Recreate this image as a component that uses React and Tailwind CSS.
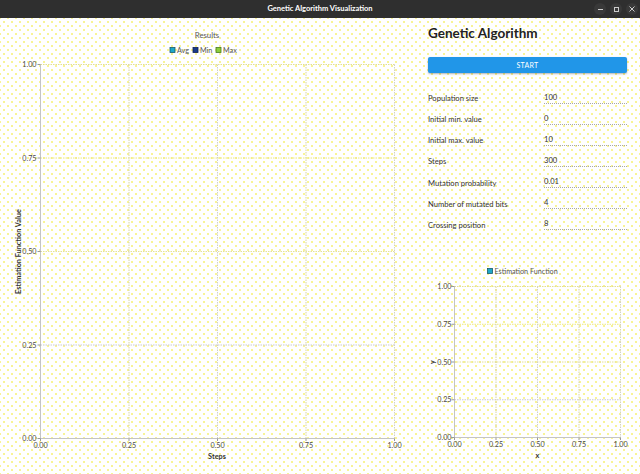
import React from "react";

const FONT = "Lato, 'Noto Sans', sans-serif";

function Legend({ x, y, color, border, label, size = 7.2 }) {
  return (
    <g>
      <rect x={x - 2.5} y={y - 2.5} width={5} height={5} fill={color} stroke={border} strokeWidth={0.8} />
      <text x={x + 4.5} y={y} fontSize={size} fill="#555" dominantBaseline="central" fontFamily={FONT}>
        {label}
      </text>
    </g>
  );
}

function Grid({ xs, ys, yLabelX, xLabelY }) {
  const left = xs[0];
  const right = xs[xs.length - 1];
  const top = ys[0];
  const bottom = ys[ys.length - 1];
  const labels = ["0.00", "0.25", "0.50", "0.75", "1.00"];
  const hColors = ["#e2df92", "#ece87c", "#e4e19a", "#c9c9d0", "#c4c4c4"];
  const vColors = ["#c4c4c4", "#d6d3a4", "#cfcfc8", "#d6d3a4", "#d2d2c0"];
  return (
    <g>
      {ys.map((y, i) => (
        <line
          key={"h" + i}
          x1={left}
          x2={right}
          y1={y}
          y2={y}
          stroke={hColors[i]}
          strokeWidth={1}
          strokeDasharray={i === ys.length - 1 ? "" : "1.5 1"}
        />
      ))}
      {xs.map((x, i) => (
        <line
          key={"v" + i}
          x1={x}
          x2={x}
          y1={top}
          y2={bottom}
          stroke={vColors[i]}
          strokeWidth={1}
          strokeDasharray={i === 0 ? "" : "1.5 1"}
        />
      ))}
      {ys.map((y, i) => (
        <line key={"yt" + i} x1={left - 3} x2={left} y1={y} y2={y} stroke="#999" strokeWidth={1} />
      ))}
      {xs.map((x, i) => (
        <line key={"xt" + i} x1={x} x2={x} y1={bottom} y2={bottom + 2.5} stroke="#999" strokeWidth={1} />
      ))}
      {ys.map((y, i) => (
        <text
          key={"yl" + i}
          x={yLabelX}
          y={y}
          fontSize={7.2}
          fill="#4a4a4a"
          textAnchor="end"
          dominantBaseline="central"
          fontFamily={FONT}
        >
          {labels[labels.length - 1 - i]}
        </text>
      ))}
      {xs.map((x, i) => (
        <text
          key={"xl" + i}
          x={x}
          y={xLabelY}
          fontSize={7.2}
          fill="#4a4a4a"
          textAnchor="middle"
          dominantBaseline="central"
          fontFamily={FONT}
        >
          {labels[i]}
        </text>
      ))}
    </g>
  );
}

function ResultsChart() {
  const xs = [40.5, 129, 217.5, 306, 394.5];
  const ys = [64.5, 158, 251.5, 345, 438.5];
  return (
    <svg width={410} height={456} viewBox="0 18 410 456" className="block">
      <text x={207} y={35} fontSize={7.8} fill="#555" textAnchor="middle" dominantBaseline="central" fontFamily={FONT}>
        Results
      </text>
      <Legend x={172.5} y={50} color="#1fa8c9" border="#1a5a6a" label="Avg" />
      <Legend x={195.5} y={50} color="#1a3c8a" border="#102050" label="Min" />
      <Legend x={218.5} y={50} color="#8ccf3c" border="#4a7a20" label="Max" />
      <Grid xs={xs} ys={ys} yLabelX={36.5} xLabelY={445.5} />
      <text
        x={18}
        y={251.5}
        fontSize={7.3}
        fontWeight="bold"
        fill="#333"
        textAnchor="middle"
        dominantBaseline="central"
        fontFamily={FONT}
        transform="rotate(-90 18 251.5)"
      >
        Estimation Function Value
      </text>
      <text x={217} y={456} fontSize={7.3} fontWeight="bold" fill="#333" textAnchor="middle" dominantBaseline="central" fontFamily={FONT}>
        Steps
      </text>
    </svg>
  );
}

function EstimationChart() {
  const xs = [454.5, 496, 537.5, 579, 620.5];
  const ys = [286.5, 324.25, 362, 399.75, 437.5];
  return (
    <svg width={230} height={238} viewBox="410 236 230 238" className="block">
      <Legend x={490} y={271} color="#1fa8c9" border="#1a5a6a" label="Estimation Function" />
      <Grid xs={xs} ys={ys} yLabelX={451.5} xLabelY={444.5} />
      <text
        x={432.5}
        y={362}
        fontSize={7.3}
        fontWeight="bold"
        fill="#333"
        textAnchor="middle"
        dominantBaseline="central"
        fontFamily={FONT}
        transform="rotate(-90 432.5 362)"
      >
        y
      </text>
      <text x={537.5} y={455.5} fontSize={7.3} fontWeight="bold" fill="#333" textAnchor="middle" dominantBaseline="central" fontFamily={FONT}>
        x
      </text>
    </svg>
  );
}

const rows = [
  ["Population size", "100"],
  ["Initial min. value", "0"],
  ["Initial max. value", "10"],
  ["Steps", "300"],
  ["Mutation probability", "0.01"],
  ["Number of mutated bits", "4"],
  ["Crossing position", "8"],
];

function TitleBar() {
  return (
    <div className="h-[18px] bg-[#2f2f2f] flex items-center relative shrink-0">
      <div className="flex-1 text-center text-white font-bold text-[7.5px] leading-[18px]">
        Genetic Algorithm Visualization
      </div>
      <div className="absolute right-[2px] top-[3px] flex gap-[4px]">
        <div className="w-[12px] h-[12px] rounded-full bg-[#393939] flex items-center justify-center">
          <div className="w-[5px] h-[1px] bg-[#ccc]" />
        </div>
        <div className="w-[12px] h-[12px] rounded-full bg-[#393939] flex items-center justify-center">
          <div className="w-[5px] h-[5px] border border-[#ccc]" />
        </div>
        <div className="w-[12px] h-[12px] rounded-full bg-[#393939] flex items-center justify-center">
          <svg width="6" height="6" viewBox="0 0 6 6">
            <path d="M0.5 0.5 L5.5 5.5 M5.5 0.5 L0.5 5.5" stroke="#ccc" strokeWidth="1" />
          </svg>
        </div>
      </div>
    </div>
  );
}

export default function App() {
  return (
    <div className="w-[640px] h-[474px] flex flex-col overflow-hidden bg-white" style={{ fontFamily: FONT }}>
      <TitleBar />
      <div className="flex-1 flex bg-white bg-[image:radial-gradient(circle,#f6f070_0.6px,transparent_1px),radial-gradient(circle,#f6f070_0.6px,transparent_1px)] bg-[length:8px_8px] bg-[position:0_0,4px_4px]">
        <div className="w-[410px] shrink-0">
          <ResultsChart />
        </div>
        <div className="w-[230px] flex flex-col">
          <div className="h-[218px] pl-[18px] pr-[13px] flex flex-col">
            <div className="mt-[6px] text-[13.5px] leading-[18px] font-bold text-[#222]">Genetic Algorithm</div>
            <div className="mt-[15px] h-[16px] bg-[#2196e8] rounded-[2px] shadow-[0_1px_2px_rgba(0,0,0,0.3)] flex items-center justify-center text-white text-[7px] tracking-[0.3px]">
              START
            </div>
            <div className="mt-[15.5px] flex flex-col">
              {rows.map(([label, value]) => (
                <div key={label} className="h-[21.1px] flex items-center">
                  <div className="w-[116px] text-[7.6px] text-[#333]">{label}</div>
                  <div className="w-[83px] -mt-[2px] h-[12px] border-b border-dotted border-[#a8a8a8] text-[7.6px] leading-[10px] text-[#333]">
                    {value}
                  </div>
                </div>
              ))}
            </div>
          </div>
          <EstimationChart />
        </div>
      </div>
    </div>
  );
}
